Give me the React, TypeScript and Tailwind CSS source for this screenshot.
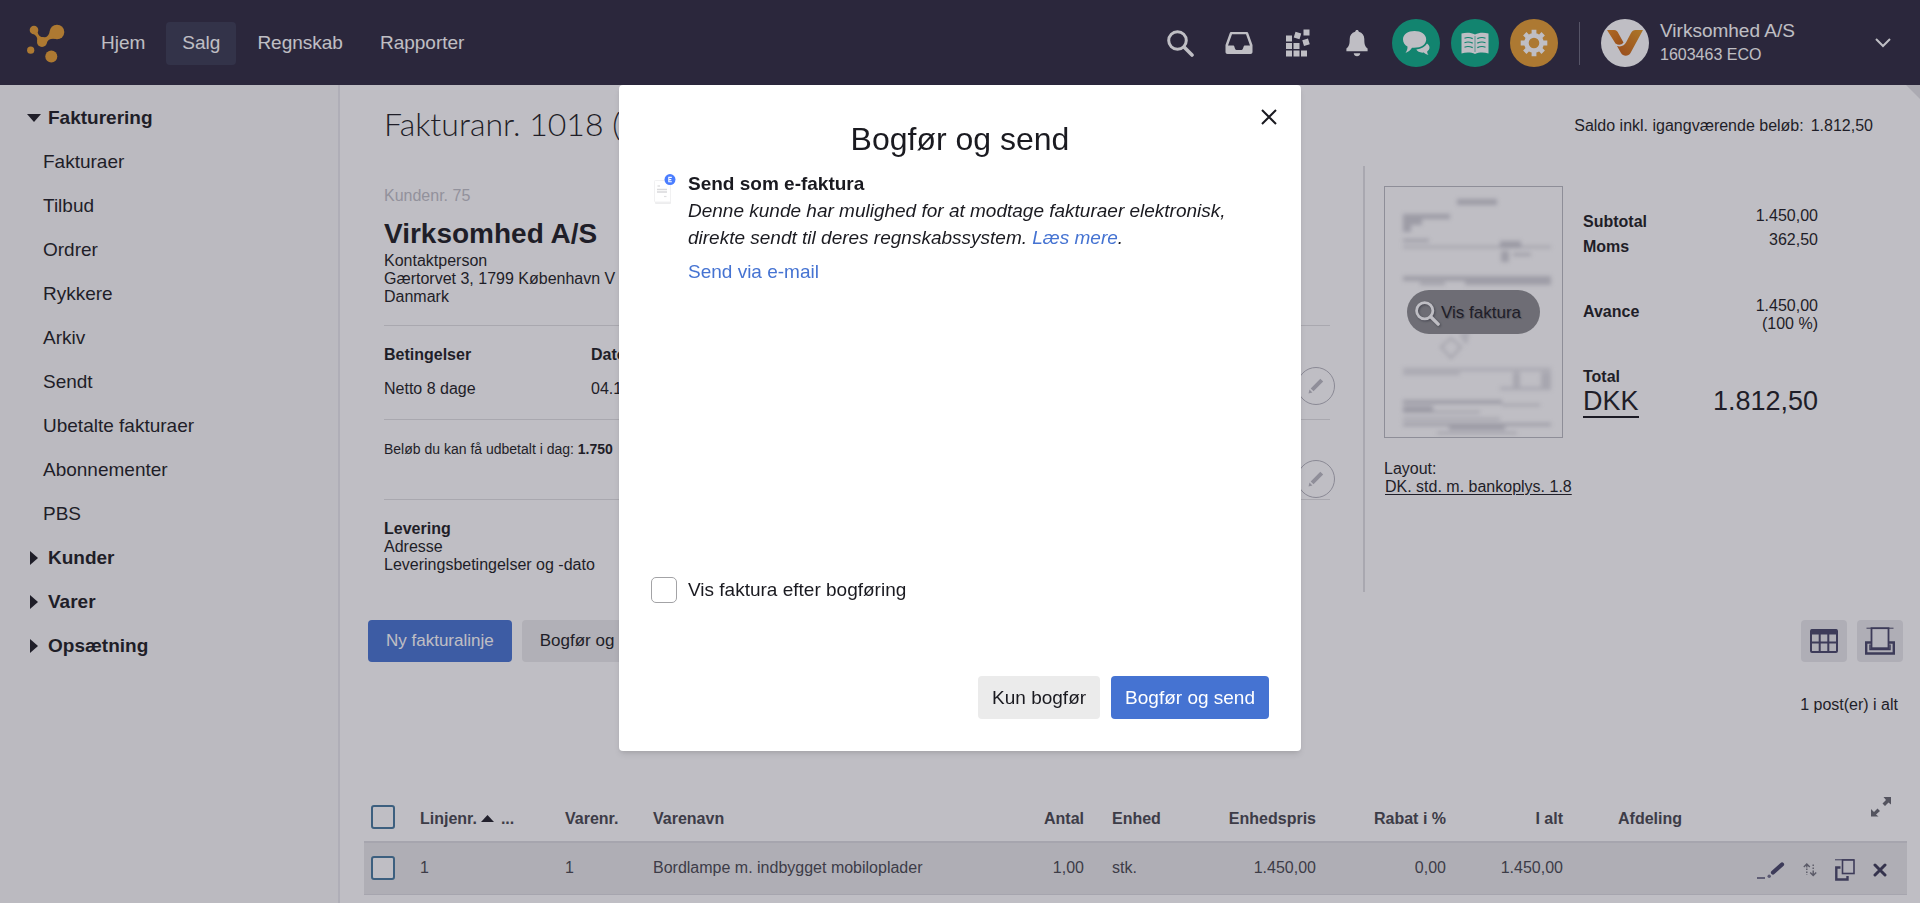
import React, { useState } from 'react';

const LogoIcon = () => (
    <svg width="38" height="40" viewBox="0 0 38 40" fill="#e59d2e" aria-hidden="true">
        <circle cx="7" cy="7" r="4.300" />
        <circle cx="30" cy="9" r="7.300" />
        <circle cx="15" cy="19" r="5" />
        <circle cx="3.700" cy="27.200" r="3.600" />
        <circle cx="24.300" cy="33.500" r="6" />
        <path d="M10.500 9C11.200 12.500 13.500 14.300 16.500 14.500C20.500 14.500 22.800 11 23 6.500L28 15.800C23.500 15.300 20.500 16.800 19.800 20L10.200 18C10.800 15 9 12.300 6.500 11Z" />
    </svg>
);

const SearchIcon = ({ size = 27 }: { size?: number }) => (
    <svg width={size} height={size} viewBox="0 0 27 27" fill="none" stroke="currentColor" strokeLinecap="round" aria-hidden="true">
        <circle cx="10.500" cy="10.500" r="8.800" strokeWidth="3" />
        <path d="M17 17L25 25" strokeWidth="3.600" />
    </svg>
);

const InboxIcon = () => (
    <svg width="28" height="22" viewBox="0 0 28 22" fill="currentColor" aria-hidden="true">
        <path fillRule="evenodd" d="M6.500 0H21.500C22.500 0 23 .5 23.400 1.400L27.500 13V20C27.500 21.200 26.700 22 25.500 22H2.500C1.300 22 .5 21.200 .5 20V13L4.600 1.400C5 .5 5.500 0 6.500 0ZM7 2.300L3 13.500H8.500C9.800 13.500 9.500 18 11.500 18H16.500C18.500 18 18.200 13.500 19.500 13.500H25L21 2.300Z" />
    </svg>
);

const AppsIcon = () => (
    <svg width="24" height="28" viewBox="0 0 24 28" fill="currentColor" aria-hidden="true">
        <rect x="0" y="6.500" width="6" height="6" />
        <rect x="0" y="14" width="6" height="6" />
        <rect x="7.500" y="14" width="6" height="6" />
        <rect x="0" y="21.500" width="6" height="6" />
        <rect x="7.500" y="21.500" width="6" height="6" />
        <rect x="15" y="21.500" width="6" height="6" />
        <rect x="17.500" y="0.500" width="6" height="6" />
        <rect x="8.500" y="3.500" width="6" height="6" transform="rotate(17 11.500 6.500)" />
        <rect x="17" y="10.300" width="6" height="6" transform="rotate(-17 20 13.300)" />
    </svg>
);

const BellIcon = () => (
    <svg width="22" height="27" viewBox="0 0 22 27" fill="currentColor" aria-hidden="true">
        <path d="M11 0C12 0 12.600 .7 12.800 1.700C16.500 2.700 18.300 5.500 18.300 9C18.300 14.500 19 16.500 21.600 18.600V21.300H.4V18.600C3 16.500 3.700 14.500 3.700 9C3.700 5.500 5.500 2.700 9.200 1.700C9.400 .7 10 0 11 0Z" />
        <path d="M7.700 23.300H14.300C14 25.300 12.800 26.300 11 26.300C9.200 26.300 8 25.300 7.700 23.300Z" />
    </svg>
);

const ChatIcon = () => (
    <svg width="28" height="26" viewBox="0 0 28 26" fill="currentColor" aria-hidden="true">
        <path d="M12.500 1C19 1 24.200 4.500 24.200 9.300C24.200 14.300 19.500 17.800 12 17.800L10 17.700C8.500 20 6 22 3.500 23C5 21 5.600 18.800 5.500 16.600C2.600 15 1 12.500 1 9.300C1 4.500 6 1 12.500 1Z" />
        <path d="M25 13.500C26.800 14.700 27.500 16 27.500 17.600C27.500 19.300 26.600 20.500 25.200 21.400C25.200 22.800 25.700 24.100 26.500 25C24.500 24.600 22.800 23.600 21.800 22.600C18.300 23 15.300 21.800 14.300 19.600C19.500 19 23 16.800 25 13.500Z" />
    </svg>
);

const BookIcon = () => (
    <svg width="28" height="22" viewBox="0 0 28 22" aria-hidden="true">
        <path fill="currentColor" d="M.5 1.500C5 .2 10 .3 14 2.500C18 .3 23 .2 27.500 1.500V21.500C23 20.200 18 20.200 14 22C10 20.200 5 20.200 .5 21.500Z" />
        <path stroke="#08ad86" strokeWidth="1.200" fill="none" d="M3.500 6.200C6 5.200 9 5.400 11.700 6.600M3.500 10.700C6 9.700 9 9.900 11.700 11.100M3.500 15.200C6 14.200 9 14.400 11.700 15.600M24.500 6.200C22 5.200 19 5.400 16.300 6.600M24.500 10.700C22 9.700 19 9.900 16.300 11.100M24.500 15.200C22 14.200 19 14.400 16.300 15.600" />
        <path stroke="#08ad86" strokeWidth=".6" d="M14 4V20" />
    </svg>
);

const GearIcon = () => (
    <svg width="28" height="28" viewBox="-14 -14 28 28" fill="none" stroke="currentColor" aria-hidden="true">
        <circle r="7.600" strokeWidth="4.600" />
        <g strokeWidth="4.800">
            <path d="M0 -9V-13.300M0 9V13.300M-9 0H-13.300M9 0H13.300" />
            <path d="M6.400 -6.400L9.200 -9.200M-6.400 6.400L-9.200 9.200M-6.400 -6.400L-9.200 -9.200M6.400 6.400L9.200 9.200" />
        </g>
    </svg>
);

const CompanyLogo = () => (
    <svg width="36" height="28" viewBox="0 0 36 28" aria-hidden="true">
        <defs>
            <linearGradient id="v-left" x1="0" y1="0" x2="1" y2="1">
                <stop offset="0" stopColor="#e8861c" />
                <stop offset="1" stopColor="#c8600c" />
            </linearGradient>
            <linearGradient id="v-right" x1="1" y1="0" x2="0" y2="1">
                <stop offset="0" stopColor="#e59a20" />
                <stop offset="1" stopColor="#c85a10" />
            </linearGradient>
        </defs>
        <path fill="url(#v-left)" d="M0 1H7C9.500 1 10.500 2.500 11.500 4.500L16.500 13.500C14.500 16 11.500 16.500 8.500 14.500Z" />
        <path fill="url(#v-right)" d="M36 1L23.500 24C21.500 27.500 16 27.500 14 24L10 17C14.500 18.500 17.500 16 19 13.500L24 4C25 2 26.500 1 28.500 1Z" />
    </svg>
);

const PencilIcon = () => (
    <svg width="16" height="16" viewBox="0 0 16 16" fill="currentColor" aria-hidden="true">
        <path d="M12.300 .8L15.200 3.500L5.500 13.200L2.700 10.500ZM1.500 11.500L4.400 14.400L.5 15.500Z" />
    </svg>
);

const GridIcon = () => (
    <svg width="28" height="24" viewBox="0 0 28 24" fill="none" stroke="#454466" aria-hidden="true">
        <rect x="1" y="1" width="26" height="22" rx="1" strokeWidth="2" />
        <path d="M1 3H27" strokeWidth="5" />
        <path d="M9.700 5V23M18.300 5V23M1 13.500H27" strokeWidth="2" />
    </svg>
);

const PrintIcon = () => (
    <svg width="30" height="28" viewBox="0 0 30 28" fill="none" stroke="#454466" aria-hidden="true">
        <path d="M6 15.500H1.200V26.500H28.800V15.500H24" strokeWidth="2.400" />
        <path d="M5 17.500V22.500H25V17.500" strokeWidth="1.500" />
        <path d="M1.500 1.200H28.500" strokeWidth="1" />
        <rect x="6.500" y="1.200" width="17" height="20" strokeWidth="1.800" fill="#f2f2f5" />
    </svg>
);

const EditLineIcon = () => (
    <svg width="28" height="17" viewBox="0 0 28 17" aria-hidden="true">
        <path d="M0 16H8" stroke="#454466" strokeWidth="1.400" />
        <path d="M16 10.500L25 2.500" stroke="#454466" strokeWidth="4.200" strokeLinecap="round" />
        <circle cx="12.200" cy="14.300" r="1.700" fill="#6d6c88" />
    </svg>
);

const MoveIcon = () => (
    <svg width="14" height="14" viewBox="0 0 14 14" fill="none" stroke="#6f6f7a" strokeWidth="1.400" aria-hidden="true">
        <path d="M.8 4L3.800 1L6.800 4M3.800 2V4.500M7.200 9.500L10.200 12.500L13.200 9.500M10.200 9V12" />
        <path d="M3.800 5.500V12M10.200 1.500V9" strokeDasharray="1.500 1.500" />
    </svg>
);

const CopyIcon = () => (
    <svg width="20" height="22" viewBox="0 0 20 22" fill="none" stroke="#454466" aria-hidden="true">
        <path d="M5.500 8.500H1.300V20.500H12.500V17" strokeWidth="2.400" />
        <path d="M0 .8H19" strokeWidth="1" />
        <rect x="7.500" y="1" width="11.500" height="13.500" strokeWidth="1.600" fill="#ececf0" />
    </svg>
);

const DeleteIcon = () => (
    <svg width="14" height="14" viewBox="0 0 14 14" stroke="#3a3955" strokeWidth="3" strokeLinecap="round" aria-hidden="true">
        <path d="M2 2L12 12M12 2L2 12" />
    </svg>
);

const ExpandIcon = () => (
    <svg width="20" height="20" viewBox="0 0 20 20" fill="#66676f" aria-hidden="true">
        <path d="M12.500 0H20V7.500L17.500 5.500L14 9L11.500 6.500L15 3Z" />
        <path d="M0 12V19.500H7.500L5 17.500L9 14L6.500 11.500L3 15Z" />
    </svg>
);

const InvoicePreview = () => (
    <svg viewBox="0 0 177 250" className="h-full w-full" aria-hidden="true">
        <defs>
            <filter id="soft">
                <feGaussianBlur stdDeviation="1.900" />
            </filter>
        </defs>
        <g fill="#bdbdc5" filter="url(#soft)">
            <path d="M72 12H112V18H72ZM18 27H65V32H18ZM18 32H37V38H18ZM18 38H26V45H18ZM18 52H44V55H18ZM115 54H136V61H115Z" opacity=".75" />
            <path d="M18 59H166V61H18ZM116 64H124V75H116ZM128 66H146V69H128ZM18 89H166V94H18ZM35 95H60V98H35ZM80 94H166V98H80Z" opacity=".7" />
            <path d="M66 151L76 160L66 171L56 160ZM76 148L83 146L81 155Z" fill="none" stroke="#d5d5da" strokeWidth="2" />
            <path d="M18 181H166V184H18ZM18 185H75V188H18ZM128 185H135V203H128ZM156 185H166V203H156ZM115 200H166V203H115Z" opacity=".5" />
            <path d="M18 213H117V217H18ZM117 217H155V219H117ZM18 219H48V226H18ZM48 224H95V226H48ZM18 231H115V233H18ZM18 236H166V239H18ZM64 239H120V243H64ZM52 245H132V247H52Z" opacity=".75" />
        </g>
    </svg>
);

const Chevron = () => (
    <svg width="16" height="10" viewBox="0 0 16 10" fill="none" stroke="currentColor" strokeWidth="2" aria-hidden="true">
        <path d="M1 1L8 8L15 1" />
    </svg>
);

const navItems = ['Hjem', 'Salg', 'Regnskab', 'Rapporter'];

const TopBar: React.FC = () => (
    <header className="flex h-[85px] shrink-0 items-center bg-[#2b283d] pl-[27px] pr-[29px] pt-px text-white">
        <a href="#" aria-label="Forside" className="mr-[20px]">
            <LogoIcon />
        </a>
        <nav className="flex gap-[5px]">
            {navItems.map(item => (
                <a
                    key={item}
                    href="#"
                    className={`flex h-[43px] items-center rounded px-4 text-[19px] ${item === 'Salg' ? 'bg-[#373850]' : ''}`}
                >
                    {item}
                </a>
            ))}
        </nav>
        <div className="ml-auto flex items-center gap-[11px]">
            <button aria-label="Søg" className="flex size-12 items-center justify-center"><SearchIcon /></button>
            <button aria-label="Indbakke" className="flex size-12 items-center justify-center"><InboxIcon /></button>
            <button aria-label="Apps" className="flex size-12 items-center justify-center"><AppsIcon /></button>
            <button aria-label="Notifikationer" className="flex size-12 items-center justify-center"><BellIcon /></button>
            <button aria-label="Chat" className="flex size-12 items-center justify-center rounded-full bg-[#08ad86]"><ChatIcon /></button>
            <button aria-label="Vejledning" className="flex size-12 items-center justify-center rounded-full bg-[#08ad86]"><BookIcon /></button>
            <button aria-label="Indstillinger" className="flex size-12 items-center justify-center rounded-full bg-[#e59d2e]"><GearIcon /></button>
        </div>
        <button className="ml-[21px] flex w-[312px] items-center text-left">
            <span className="h-[43px] w-px bg-[#69677a]" />
            <span className="ml-[21px] flex size-12 items-center justify-center rounded-full bg-white"><CompanyLogo /></span>
            <span className="ml-[11px] flex-1">
                <span className="block text-[19px] leading-6">Virksomhed A/S</span>
                <span className="block text-base leading-6">1603463 ECO</span>
            </span>
            <Chevron />
        </button>
    </header>
);

const salesLinks = ['Fakturaer', 'Tilbud', 'Ordrer', 'Rykkere', 'Arkiv', 'Sendt', 'Ubetalte fakturaer', 'Abonnementer', 'PBS'];
const closedGroups = ['Kunder', 'Varer', 'Opsætning'];

const Sidebar: React.FC = () => (
    <aside className="w-[340px] shrink-0 border-r-2 border-[#e8e9ec] bg-[#f9f9fa] pt-[11px] text-[19px]">
        <button className="flex h-11 items-center pl-[27px] font-bold">
            <svg width="21" height="9" viewBox="0 0 21 9" fill="currentColor" aria-hidden="true"><path d="M0 0H14L7 8Z" /></svg>
            Fakturering
        </button>
        <ul>
            {salesLinks.map(link => (
                <li key={link}>
                    <a href="#" className="flex h-11 items-center pl-[43px]">{link}</a>
                </li>
            ))}
        </ul>
        {closedGroups.map(group => (
            <button key={group} className="flex h-11 items-center pl-[30px] font-bold">
                <svg width="18" height="14" viewBox="0 0 18 14" fill="currentColor" aria-hidden="true"><path d="M0 0L8 7L0 14Z" /></svg>
                {group}
            </button>
        ))}
    </aside>
);

const EditButton: React.FC<{ label: string }> = ({ label }) => (
    <button
        aria-label={label}
        className="-mr-[5px] flex size-[38px] shrink-0 items-center justify-center self-end rounded-full border border-[#b4b4bc] text-[#bbbbc2]"
    >
        <PencilIcon />
    </button>
);

const CustomerDetails: React.FC = () => (
    <section className="flex-1 pb-[18px] pl-11 pr-[33px] pt-[21px] leading-[18px]">
        <p className="text-[#bfc0c6]">Kundenr. 75</p>
        <h2 className="mt-[11px] text-[28px] font-bold leading-9">Virksomhed A/S</h2>
        <p>Kontaktperson</p>
        <p>Gærtorvet 3, 1799 København V</p>
        <p>Danmark</p>

        <div className="mt-[19px] flex border-t border-[#e0e0e1] pb-[14px] pt-5">
            <dl className="mb-[7px] flex flex-1">
                <div className="w-[207px]">
                    <dt className="font-bold">Betingelser</dt>
                    <dd className="mt-4">Netto 8 dage</dd>
                </div>
                <div>
                    <dt className="font-bold">Dato</dt>
                    <dd className="mt-4">04.1</dd>
                </div>
            </dl>
            <EditButton label="Rediger betingelser" />
        </div>

        <div className="flex border-t border-[#e0e0e1] pb-[1px] pt-5">
            <p className="h-[58px] flex-1 text-sm leading-[18px]">
                Beløb du kan få udbetalt i dag: <b>1.750</b>
            </p>
            <EditButton label="Rediger udbetaling" />
        </div>

        <div className="border-t border-[#e0e0e1] pt-5">
            <p className="font-bold">Levering</p>
            <p>Adresse</p>
            <p>Leveringsbetingelser og -dato</p>
        </div>
    </section>
);

const InvoiceSummary: React.FC = () => (
    <section className="w-[557px] shrink-0 border-l-2 border-[#e0e0e3] pl-[19px] pt-5 leading-[18px]">
        <div className="flex gap-5">
            <div className="relative h-[252px] w-[179px] border border-[#b9bac0]">
                <InvoicePreview />
                <button className="absolute inset-x-[22px] top-[103px] flex h-11 items-center gap-px rounded-full bg-[#8b8c8e] pl-2 pt-0.5 text-[17px] text-[#1a1a20] [text-shadow:1px_1px_1px_#66676d]">
                    <span className="text-white drop-shadow-[1px_1px_1px_#55565c]"><SearchIcon size={25} /></span>
                    Vis faktura
                </button>
            </div>
            <div className="flex w-[235px] justify-between">
                <div className="pt-[27px] font-bold">
                    <p>Subtotal</p>
                    <p className="mt-[7px]">Moms</p>
                    <p className="mt-[47px]">Avance</p>
                    <p className="mt-[47px]">Total</p>
                    <a href="#" className="inline-block border-b-2 border-[#16161c] text-[27px] font-normal leading-[30px]">DKK</a>
                </div>
                <div className="pt-[21px] text-right">
                    <p>1.450,00</p>
                    <p className="mt-[6px]">362,50</p>
                    <p className="mt-12">1.450,00</p>
                    <p>(100 %)</p>
                    <p className="mt-[52px] text-[27px] leading-8">1.812,50</p>
                </div>
            </div>
        </div>
        <p className="mt-[22px]">Layout:</p>
        <a href="#" className="ml-px underline underline-offset-2">DK. std. m. bankoplys. 1.8</a>
    </section>
);

const ActionBar: React.FC = () => (
    <div className="mt-7 flex justify-between pl-7 pr-[17px] text-[17px]">
        <div className="flex gap-[10px]">
            <button className="h-[42px] rounded bg-[#4573d2] px-[18px] text-white">Ny fakturalinje</button>
            <button className="h-[42px] rounded bg-[#ebebec] px-[18px]">Bogfør og send</button>
        </div>
        <div className="flex gap-[10px]">
            <button aria-label="Tabelvisning" className="flex h-[42px] w-[46px] items-center justify-center rounded bg-[#e9e9eb]"><GridIcon /></button>
            <button aria-label="Udskriv" className="flex h-[42px] w-[46px] items-center justify-center rounded bg-[#e9e9eb]"><PrintIcon /></button>
        </div>
    </div>
);

const lines = [
    { nr: '1', itemNr: '1', name: 'Bordlampe m. indbygget mobiloplader', qty: '1,00', unit: 'stk.', price: '1.450,00', discount: '0,00', total: '1.450,00', department: '' },
];

const checkboxClass = 'block size-6 appearance-none rounded-[3px] border-2 border-[#44789c]';

const InvoiceLines: React.FC = () => (
    <div className="mt-[78px] pl-6 pr-[13px]">
        <table className="w-full table-fixed border-collapse text-left text-base leading-[18px] text-[#46464d]">
            <colgroup>
                <col className="w-[56px]" />
                <col className="w-[145px]" />
                <col className="w-[88px]" />
                <col />
                <col className="w-[60px]" />
                <col className="w-[116px]" />
                <col className="w-[116px]" />
                <col className="w-[130px]" />
                <col className="w-[117px]" />
                <col className="w-[150px]" />
                <col className="w-[194px]" />
            </colgroup>
            <thead>
                <tr className="h-[50px] border-b-2 border-[#dcdce0]">
                    <th className="pl-[7px]"><input type="checkbox" aria-label="Vælg alle" className={checkboxClass} /></th>
                    <th className="pt-1">
                        <span className="flex items-center gap-1">
                            Linjenr.
                            <svg width="13" height="8" viewBox="0 0 13 8" fill="#1f1f27" aria-hidden="true"><path d="M0 7L6.500 0L13 7Z" /></svg>
                            <span className="ml-[3px]">...</span>
                        </span>
                    </th>
                    <th className="pt-1">Varenr.</th>
                    <th className="pt-1">Varenavn</th>
                    <th className="pt-1 text-right">Antal</th>
                    <th className="pl-7 pt-1">Enhed</th>
                    <th className="pt-1 text-right">Enhedspris</th>
                    <th className="pt-1 text-right">Rabat i %</th>
                    <th className="pt-1 text-right">I alt</th>
                    <th className="pl-[55px] pt-1">Afdeling</th>
                    <th className="pb-[20px] pr-4">
                        <button aria-label="Udvid" className="ml-auto block"><ExpandIcon /></button>
                    </th>
                </tr>
            </thead>
            <tbody>
                {lines.map(line => (
                    <tr key={line.nr} className="h-[52px] border-b border-[#dcdce0] bg-[#e8e9ea]">
                        <td className="pl-[7px]"><input type="checkbox" aria-label={`Vælg linje ${line.nr}`} className={`${checkboxClass} bg-white`} /></td>
                        <td>{line.nr}</td>
                        <td>{line.itemNr}</td>
                        <td>{line.name}</td>
                        <td className="text-right">{line.qty}</td>
                        <td className="pl-7">{line.unit}</td>
                        <td className="text-right">{line.price}</td>
                        <td className="text-right">{line.discount}</td>
                        <td className="text-right">{line.total}</td>
                        <td className="pl-[55px]">{line.department}</td>
                        <td>
                            <div className="flex items-center justify-end gap-[18px] pr-5 pt-1">
                                <button aria-label="Rediger linje"><EditLineIcon /></button>
                                <button aria-label="Flyt linje"><MoveIcon /></button>
                                <button aria-label="Kopier linje"><CopyIcon /></button>
                                <button aria-label="Slet linje"><DeleteIcon /></button>
                            </div>
                        </td>
                    </tr>
                ))}
            </tbody>
        </table>
    </div>
);

const EInvoiceIcon = () => (
    <svg width="26" height="32" viewBox="0 0 26 32" className="mt-1 shrink-0" aria-hidden="true">
        <rect x="4" y="8" width="16" height="22" rx="1" fill="#ededee" />
        <rect x="3.500" y="6.500" width="16" height="21.500" rx="1" fill="#fff" stroke="#f1f1f2" />
        <path d="M6.500 12H9" stroke="#dfdfe1" strokeWidth="1.500" />
        <path d="M6 15.500H16M6 18H16" stroke="#d9d9db" strokeWidth="1.600" />
        <path d="M13 22.500H15.500" stroke="#dfdfe1" strokeWidth="1.200" />
        <circle cx="19" cy="5.600" r="5.500" fill="#4a7dff" />
        <path d="M20.800 3.400H17.800V7.800H20.800M17.800 5.600H20.300" stroke="#fff" strokeWidth="1.100" fill="none" />
    </svg>
);

interface PostDialogProps {
    onClose: () => void;
}

const PostDialog: React.FC<PostDialogProps> = ({ onClose }) => {
    const [showAfter, setShowAfter] = useState(false);

    return (
        <div className="fixed inset-0 flex items-start justify-center bg-[#2a283d]/30 pt-[85px]">
            <div role="dialog" aria-labelledby="dialog-title" className="w-[682px] rounded bg-white px-8 pb-8 pt-6 text-[19px] leading-[27px] shadow-md">
                <div className="flex justify-end">
                    <button aria-label="Luk" onClick={onClose} className="-mr-2">
                        <svg width="16" height="16" viewBox="0 0 16 16" stroke="currentColor" strokeWidth="2" aria-hidden="true">
                            <path d="M1 1L15 15M15 1L1 15" />
                        </svg>
                    </button>
                </div>
                <h1 id="dialog-title" className="-mt-1.5 text-center text-[32px] leading-10">Bogfør og send</h1>
                <div className="mt-[11px] flex min-h-[406px]">
                    <EInvoiceIcon />
                    <div className="ml-[11px]">
                        <p className="font-bold">Send som e-faktura</p>
                        <p className="italic">
                            Denne kunde har mulighed for at modtage fakturaer elektronisk,
                            <br />
                            direkte sendt til deres regnskabssystem. <a href="#" className="text-[#4573d2]">Læs mere</a>.
                        </p>
                        <a href="#" className="mt-[7px] block text-[#4573d2]">Send via e-mail</a>
                    </div>
                </div>
                <label className="flex items-center gap-[11px]">
                    <input
                        type="checkbox"
                        checked={showAfter}
                        onChange={e => setShowAfter(e.target.checked)}
                        className="size-[26px] appearance-none rounded-[5px] border border-[#a3a3a6]"
                    />
                    Vis faktura efter bogføring
                </label>
                <div className="mt-[73px] flex justify-end gap-[11px]">
                    <button className="h-[43px] rounded bg-[#ebebeb] px-[14px]">Kun bogfør</button>
                    <button className="h-[43px] rounded bg-[#4573d2] px-[14px] text-white">Bogfør og send</button>
                </div>
            </div>
        </div>
    );
};

const App: React.FC = () => {
    const [dialogOpen, setDialogOpen] = useState(true);

    return (
        <div className="flex min-h-screen flex-col bg-white font-['Liberation_Sans',Arial,sans-serif] text-base text-[#1a1a20]">
            <TopBar />
            <div className="flex flex-1">
                <Sidebar />
                <main className="relative min-w-0 flex-1">
                    <svg width="14" height="14" viewBox="0 0 14 14" fill="#e3e3e6" className="absolute right-0 top-0" aria-hidden="true"><path d="M0 0H14V14Z" /></svg>
                    <div className="flex h-[81px] items-start justify-between pl-11 pr-[47px] pt-[19px]">
                        <h1 className="font-['Lato',sans-serif] text-[32px] font-light leading-10">Fakturanr. 1018 (</h1>
                        <p className="flex gap-[7px] pt-[13px] leading-[18px]">
                            <span>Saldo inkl. igangværende beløb:</span>
                            <span>1.812,50</span>
                        </p>
                    </div>
                    <div className="flex">
                        <CustomerDetails />
                        <InvoiceSummary />
                    </div>
                    <ActionBar />
                    <p className="mt-[34px] pr-[22px] text-right leading-[18px]">1 post(er) i alt</p>
                    <InvoiceLines />
                </main>
            </div>
            {dialogOpen && <PostDialog onClose={() => setDialogOpen(false)} />}
        </div>
    );
};

export default App;
